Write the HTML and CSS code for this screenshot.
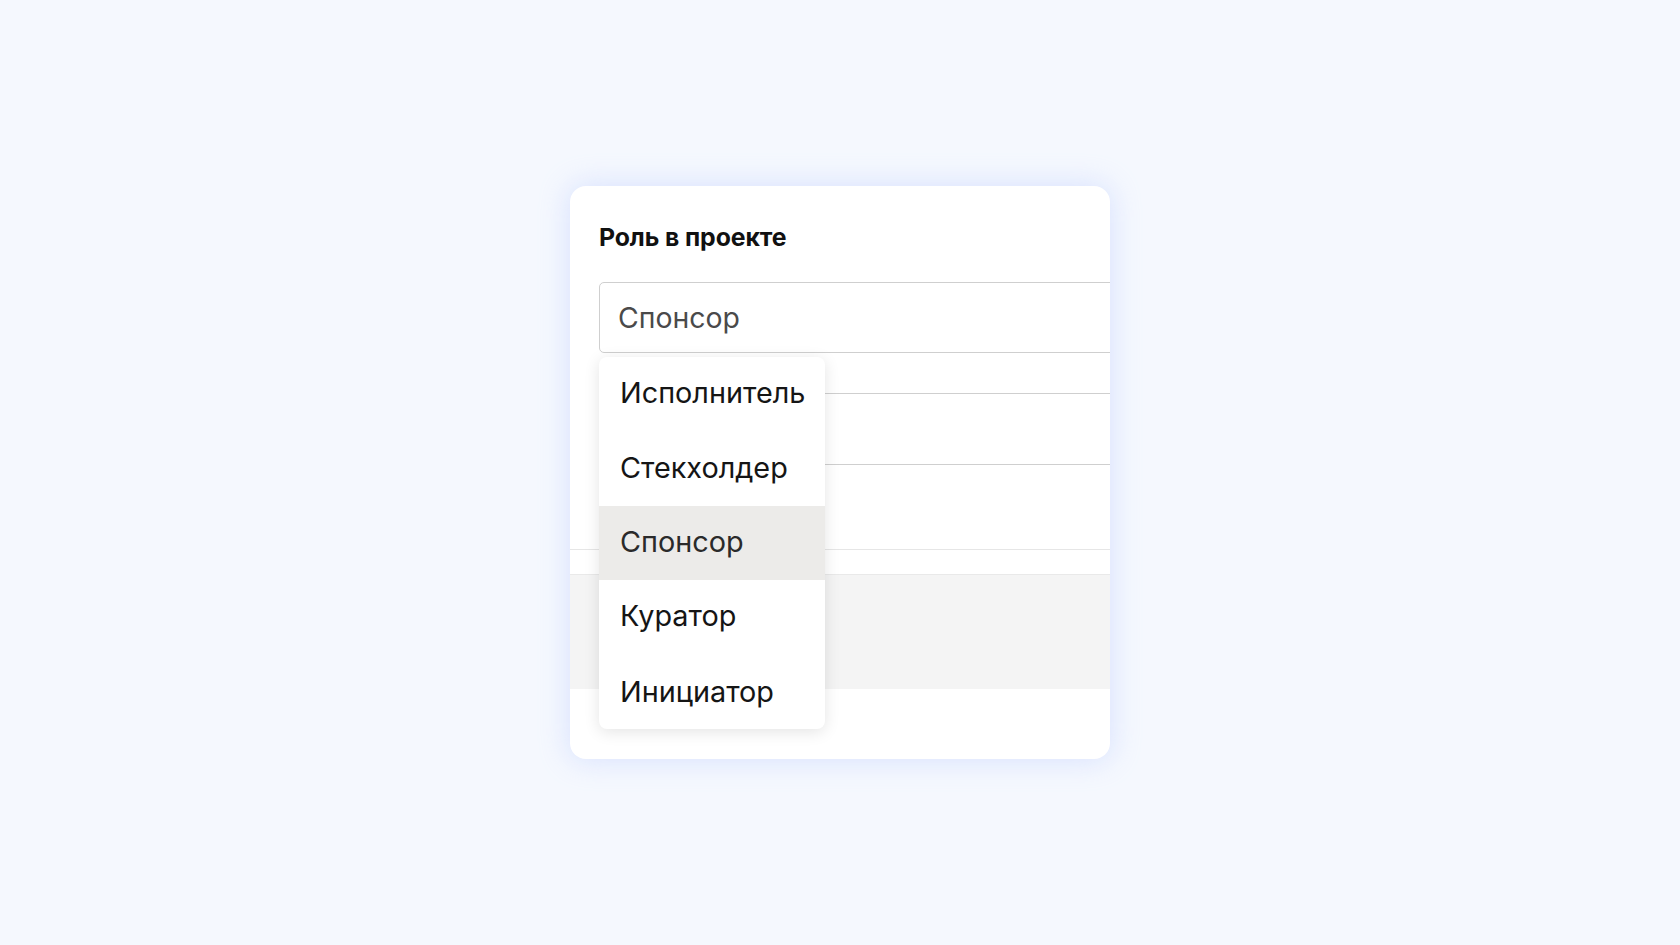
FILE: index.html
```html
<!DOCTYPE html>
<html lang="ru">
<head>
<meta charset="utf-8">
<title>Роль в проекте</title>
<link rel="stylesheet" href="styles.css">
</head>
<body>
<div class="stage">
  <div class="card">
    <div class="card-body">
      <div class="label">Роль в проекте</div>
      <div class="field">
        <div class="input">Спонсор</div>
        <ul class="menu">
          <li class="item">Исполнитель</li>
          <li class="item">Стекхолдер</li>
          <li class="item selected">Спонсор</li>
          <li class="item">Куратор</li>
          <li class="item">Инициатор</li>
        </ul>
      </div>
      <div class="input input-ghost"></div>
    </div>
    <div class="divider"></div>
    <div class="footer"></div>
  </div>
</div>
</body>
</html>
```
FILE: styles.css
```css
* { box-sizing: border-box; }
html, body { margin: 0; padding: 0; }
body {
  background: #f5f8fe;
  font-family: "Inter", "Noto Sans", sans-serif;
  color: #111;
}
.stage {
  height: 100vh;
  display: flex;
  align-items: center;
  justify-content: center;
}
.card {
  width: 540px;
  height: 573px;
  background: #fff;
  border-radius: 16px;
  box-shadow: 0 0 28px 2px rgba(185, 202, 255, 0.45);
  overflow: hidden;
  display: flex;
  flex-direction: column;
}
.card-body {
  padding: 37px 0 0 29px;
  height: 363px;
}
.label {
  font-size: 24.8px;
  line-height: 28px;
  font-weight: 700;
  letter-spacing: -0.1px;
  color: #111;
}
.field {
  position: relative;
  margin-top: 31px;
}
.input {
  width: 640px;
  height: 71px;
  border: 1.5px solid #cfcfcf;
  border-radius: 5px;
  padding-left: 18px;
  display: flex;
  align-items: center;
  font-size: 28.4px;
  color: #4a4a4a;
  background: #fff;
}
.input-ghost {
  margin-top: 40px;
  height: 72px;
}
.menu {
  position: absolute;
  left: 0;
  top: calc(100% + 4px);
  width: 226px;
  margin: 0;
  padding: 0;
  list-style: none;
  background: #fff;
  border-radius: 8px;
  box-shadow: 0 3px 16px rgba(0, 0, 0, 0.11);
  overflow: hidden;
  z-index: 2;
}
.item {
  height: 74.4px;
  display: flex;
  align-items: center;
  padding-left: 21px;
  padding-bottom: 3px;
  font-size: 28.8px;
  color: #151515;
}
.item:last-child {
  padding-bottom: 0;
}
.item.selected {
  background: #ecebe9;
  color: #2a2a2a;
}
.divider {
  height: 25px;
  border-top: 1.5px solid #e6e6e6;
}
.footer {
  height: 115px;
  background: #f4f4f4;
  border-top: 1.5px solid #e9e9e9;
}
```
